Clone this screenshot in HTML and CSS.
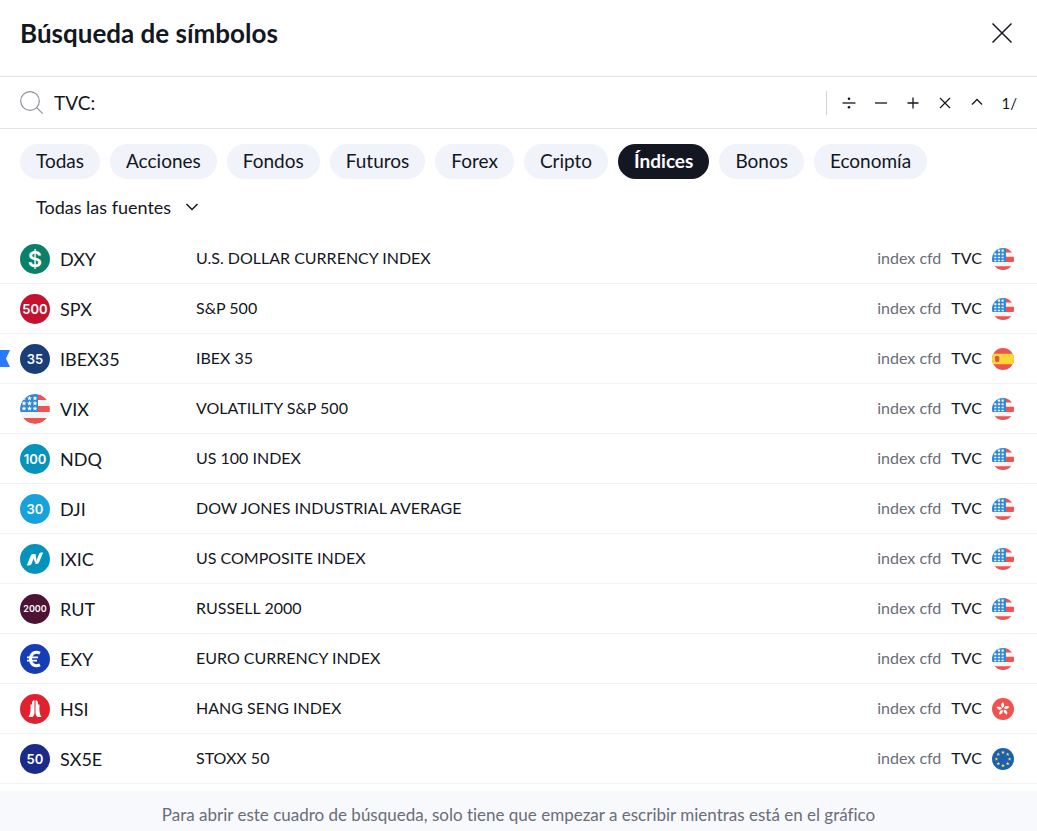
FILE: index.html
```html
<!DOCTYPE html>
<html lang="es">
<head>
<meta charset="utf-8">
<title>Búsqueda de símbolos</title>
<link rel="stylesheet" href="styles.css">
</head>
<body>
<svg class="defs" aria-hidden="true">
  <defs>
    <clipPath id="round"><circle cx="15" cy="15" r="15"/></clipPath>
    <path id="star" d="M0-2.500 .7-.8 2.500-.8 1.100.4 1.600 2.200 0 1.100-1.600 2.200-1.100.4-2.500-.8-.7-.8z"/>
    <symbol id="us" viewBox="0 0 30 30">
      <g clip-path="url(#round)">
        <path fill="#f3f4f6" d="M0 0h30v30H0z"/>
        <path fill="#ef5350" d="M18 0h12v6H18zM18 12h12v6H18zM0 24h30v6H0z"/>
        <path fill="#2f86d6" d="M0 0h18v18H0z"/>
        <g fill="#fff">
          <use href="#star" x="4" y="4.200"/><use href="#star" x="9.500" y="4.200"/><use href="#star" x="15" y="4.200"/>
          <use href="#star" x="4" y="9.300"/><use href="#star" x="9.500" y="9.300"/><use href="#star" x="15" y="9.300"/>
          <use href="#star" x="4" y="14.500"/><use href="#star" x="9.500" y="14.500"/><use href="#star" x="15" y="14.500"/>
        </g>
      </g>
    </symbol>
    <symbol id="us-small" viewBox="0 0 30 30">
      <g clip-path="url(#round)">
        <path fill="#f3f4f6" d="M0 0h30v30H0z"/>
        <path fill="#ef5350" d="M18 0h12v6H18zM18 12h12v7H18zM0 25h30v5H0z"/>
        <path fill="#2f86d6" d="M0 0h19v19H0z"/>
        <path fill="#e9f3fc" d="M8 2h3v3H8zM13 2h3v3h-3zM3 7h3v3H3zM8 7h3v3H8zM13 7h3v3h-3zM3 12h3v2H3zM8 12h3v2H8zM13 12h3v2h-3zM3 16h3v2H3zM8 16h3v2H8zM13 16h3v2h-3z"/>
      </g>
    </symbol>
    <symbol id="es" viewBox="0 0 30 30">
      <g clip-path="url(#round)">
        <path fill="#ef5350" d="M0 0h30v30H0z"/>
        <path fill="#fdd835" d="M0 8h30v14H0z"/>
        <path fill="#e5534b" d="M4 12h6v4.500a3 3 0 0 1-6 0z"/>
        <path fill="#b9603a" d="M5 11h4v2H5z"/>
      </g>
    </symbol>
    <symbol id="hk" viewBox="0 0 30 30">
      <circle cx="15" cy="15" r="15" fill="#ef5350"/>
      <g fill="#fff">
        <path id="petal" d="M14.500 13.500C11.500 11 12 7 15.500 5.800c-.3 1.700 1.600 3 1 5.200-.3 1-1 1.800-2 2.500z"/>
        <use href="#petal" transform="rotate(72 15 15)"/>
        <use href="#petal" transform="rotate(144 15 15)"/>
        <use href="#petal" transform="rotate(216 15 15)"/>
        <use href="#petal" transform="rotate(288 15 15)"/>
      </g>
    </symbol>
    <symbol id="eu" viewBox="0 0 30 30">
      <circle cx="15" cy="15" r="15" fill="#1c60b4"/>
      <g fill="#f6e04b">
        <use href="#star" x="15" y="6"/><use href="#star" x="21.400" y="8.600"/><use href="#star" x="24" y="15"/><use href="#star" x="21.400" y="21.400"/>
        <use href="#star" x="15" y="24"/><use href="#star" x="8.600" y="21.400"/><use href="#star" x="6" y="15"/><use href="#star" x="8.600" y="8.600"/>
      </g>
    </symbol>
  </defs>
</svg>

<main class="dialog">
  <header class="header">
    <h1 class="title">Búsqueda de símbolos</h1>
    <button class="close" type="button" aria-label="Cerrar">
      <svg width="22" height="22" viewBox="0 0 22 22"><path d="M1.500 1.500l19 19M20.500 1.500l-19 19" fill="none" stroke="#131722" stroke-width="1.500"/></svg>
    </button>
  </header>

  <div class="search">
    <svg class="search-icon" width="24" height="24" viewBox="0 0 24 24" fill="none" stroke="#8f929b" stroke-width="1.200"><circle cx="10" cy="10" r="9.300"/><path d="M16.700 16.700l6 6"/></svg>
    <input class="search-input" type="text" value="TVC:" aria-label="Buscar símbolo">
    <div class="operators">
      <button class="op" type="button" aria-label="Dividir"><svg width="14" height="14" viewBox="0 0 14 14"><path d="M.5 7h13" stroke="#131722" stroke-width="1.300"/><circle cx="7" cy="2.700" r="1.300" fill="#131722"/><circle cx="7" cy="11.300" r="1.300" fill="#131722"/></svg></button>
      <button class="op" type="button" aria-label="Restar"><svg width="14" height="14" viewBox="0 0 14 14"><path d="M1 7h12" stroke="#131722" stroke-width="1.300"/></svg></button>
      <button class="op" type="button" aria-label="Sumar"><svg width="14" height="14" viewBox="0 0 14 14"><path d="M1.500 7h11M7 1.500v11" stroke="#131722" stroke-width="1.300"/></svg></button>
      <button class="op" type="button" aria-label="Multiplicar"><svg width="14" height="14" viewBox="0 0 14 14"><path d="M2 2l10 10M12 2L2 12" stroke="#131722" stroke-width="1.200"/></svg></button>
      <button class="op" type="button" aria-label="Potencia"><svg width="14" height="14" viewBox="0 0 14 14"><path d="M2 8.500l5-5 5 5" fill="none" stroke="#131722" stroke-width="1.300"/></svg></button>
      <button class="op" type="button" aria-label="Inverso">1/</button>
    </div>
  </div>

  <nav class="chips" aria-label="Tipo de símbolo">
    <button class="chip" type="button">Todas</button>
    <button class="chip" type="button">Acciones</button>
    <button class="chip" type="button">Fondos</button>
    <button class="chip" type="button">Futuros</button>
    <button class="chip" type="button">Forex</button>
    <button class="chip" type="button">Cripto</button>
    <button class="chip chip-active" type="button" aria-pressed="true">Índices</button>
    <button class="chip" type="button">Bonos</button>
    <button class="chip" type="button">Economía</button>
  </nav>

  <button class="sources" type="button">Todas las fuentes
    <svg width="14" height="10" viewBox="0 0 14 10"><path d="M1.500 2L7 7.500 12.500 2" fill="none" stroke="#131722" stroke-width="1.500"/></svg>
  </button>

  <table class="results">
    <tbody>
      <tr>
        <td class="symbol"><div class="symbol-box"><span class="badge green">$</span>DXY</div></td>
        <td class="name">U.S. DOLLAR CURRENCY INDEX</td>
        <td class="market"><div class="market-box"><span class="kind">index cfd</span><span class="exchange">TVC</span><svg class="flag"><use href="#us-small"/></svg></div></td>
      </tr>
      <tr>
        <td class="symbol"><div class="symbol-box"><span class="badge red">500</span>SPX</div></td>
        <td class="name">S&amp;P 500</td>
        <td class="market"><div class="market-box"><span class="kind">index cfd</span><span class="exchange">TVC</span><svg class="flag"><use href="#us-small"/></svg></div></td>
      </tr>
      <tr>
        <td class="symbol"><svg class="marker" viewBox="0 0 10 17"><path d="M0 0h10L6 8.500 10 17H0z" fill="#2979ff"/></svg><div class="symbol-box"><span class="badge navy">35</span>IBEX35</div></td>
        <td class="name">IBEX 35</td>
        <td class="market"><div class="market-box"><span class="kind">index cfd</span><span class="exchange">TVC</span><svg class="flag"><use href="#es"/></svg></div></td>
      </tr>
      <tr>
        <td class="symbol"><div class="symbol-box"><svg class="badge"><use href="#us"/></svg>VIX</div></td>
        <td class="name">VOLATILITY S&amp;P 500</td>
        <td class="market"><div class="market-box"><span class="kind">index cfd</span><span class="exchange">TVC</span><svg class="flag"><use href="#us-small"/></svg></div></td>
      </tr>
      <tr>
        <td class="symbol"><div class="symbol-box"><span class="badge teal">100</span>NDQ</div></td>
        <td class="name">US 100 INDEX</td>
        <td class="market"><div class="market-box"><span class="kind">index cfd</span><span class="exchange">TVC</span><svg class="flag"><use href="#us-small"/></svg></div></td>
      </tr>
      <tr>
        <td class="symbol"><div class="symbol-box"><span class="badge sky">30</span>DJI</div></td>
        <td class="name">DOW JONES INDUSTRIAL AVERAGE</td>
        <td class="market"><div class="market-box"><span class="kind">index cfd</span><span class="exchange">TVC</span><svg class="flag"><use href="#us-small"/></svg></div></td>
      </tr>
      <tr>
        <td class="symbol"><div class="symbol-box"><svg class="badge teal" viewBox="0 0 30 30" fill="#fff"><path d="M6.800 21.500l3.900-9.800c.5-1.200 1.300-1.700 2.500-1.700h2.300l1 6.200-1.300 3-1.600-4.700-1.700 4.500c-.7 1.800-1.800 2.500-3.300 2.500z"/><path d="M23.200 8.500l-3.900 9.300c-.6 1.500-1.600 2.200-2.800 2.200h-1.300l2.700-7.300 1-2.300c.6-1.300 1.500-1.900 2.800-1.900z"/></svg>IXIC</div></td>
        <td class="name">US COMPOSITE INDEX</td>
        <td class="market"><div class="market-box"><span class="kind">index cfd</span><span class="exchange">TVC</span><svg class="flag"><use href="#us-small"/></svg></div></td>
      </tr>
      <tr>
        <td class="symbol"><div class="symbol-box"><span class="badge plum">2000</span>RUT</div></td>
        <td class="name">RUSSELL 2000</td>
        <td class="market"><div class="market-box"><span class="kind">index cfd</span><span class="exchange">TVC</span><svg class="flag"><use href="#us-small"/></svg></div></td>
      </tr>
      <tr>
        <td class="symbol"><div class="symbol-box"><svg class="badge blue" viewBox="0 0 30 30" fill="none" stroke="#fff"><path stroke-width="3" d="M20 9.200C15 6.700 10.500 9.500 10.500 15s4.500 8.300 9.500 5.800"/><path stroke-width="1.700" d="M7 13.300h11M7 16.700h10"/></svg>EXY</div></td>
        <td class="name">EURO CURRENCY INDEX</td>
        <td class="market"><div class="market-box"><span class="kind">index cfd</span><span class="exchange">TVC</span><svg class="flag"><use href="#us-small"/></svg></div></td>
      </tr>
      <tr>
        <td class="symbol"><div class="symbol-box"><svg class="badge scarlet" viewBox="0 0 30 30" fill="#fff"><path d="M14.500 6.500V19c0 1.500-.7 3-2.200 4H8.500c2.500-4 2-8 2-12.500h1.500V7.500h1v-1z"/><path d="M15.500 6.500V19c0 1.500.7 3 2.200 4h3.800c-2.500-4-2-8-2-12.500H18V7.500h-1v-1z"/></svg>HSI</div></td>
        <td class="name">HANG SENG INDEX</td>
        <td class="market"><div class="market-box"><span class="kind">index cfd</span><span class="exchange">TVC</span><svg class="flag"><use href="#hk"/></svg></div></td>
      </tr>
      <tr>
        <td class="symbol"><div class="symbol-box"><span class="badge indigo">50</span>SX5E</div></td>
        <td class="name">STOXX 50</td>
        <td class="market"><div class="market-box"><span class="kind">index cfd</span><span class="exchange">TVC</span><svg class="flag"><use href="#eu"/></svg></div></td>
      </tr>
    </tbody>
  </table>

  <footer class="footer">Para abrir este cuadro de búsqueda, solo tiene que empezar a escribir mientras está en el gráfico</footer>
</main>
</body>
</html>
```

FILE: styles.css
```css
* {
  box-sizing: border-box;
}

body {
  margin: 0;
  background: #fff;
  color: #131722;
  font-family: "Trebuchet MS", Lato, sans-serif;
  font-size: 18px;
  font-variant-ligatures: none;
}

button,
input {
  margin: 0;
  padding: 0;
  border: 0;
  background: none;
  color: inherit;
  font: inherit;
}

svg {
  display: block;
  flex: none;
}

.defs {
  position: absolute;
  width: 0;
  height: 0;
}

.header {
  display: flex;
  align-items: center;
  justify-content: space-between;
  padding: 16px 24px 26px 20px;
  border-bottom: 1px solid #e0e3eb;
}

.title {
  margin: 0;
  font-size: 26px;
  font-weight: 700;
  line-height: 34px;
}

.search {
  display: flex;
  align-items: center;
  height: 52px;
  padding: 0 20px;
  gap: 10px;
  border-bottom: 1px solid #e0e3eb;
}

.search-input {
  flex: 1;
  min-width: 0;
  font-size: 19px;
  outline: none;
}

.operators {
  display: flex;
  align-items: center;
  height: 24px;
  padding-left: 15px;
  gap: 18px;
  border-left: 1px solid #d1d4dc;
}

.op {
  font-size: 15px;
  line-height: 24px;
}

.chips {
  display: flex;
  flex-wrap: wrap;
  gap: 10px;
  padding: 15px 20px 0;
}

.chip {
  height: 35px;
  padding: 0 16px 2px;
  border-radius: 18px;
  background: #f0f3fa;
  font-size: 19px;
}

.chip-active {
  background: #131722;
  color: #fff;
  font-weight: 700;
}

.sources {
  display: flex;
  align-items: center;
  gap: 14px;
  margin: 16px 0 15px 36px;
  font-size: 18px;
  line-height: 24px;
}

.results {
  width: 100%;
  border-collapse: separate;
  border-spacing: 0;
}

.results td {
  height: 50px;
  padding: 0;
  border-bottom: 1px solid #f0f3fa;
}

.results .symbol {
  position: relative;
  width: 196px;
  padding-left: 20px;
  font-size: 18px;
}

.symbol-box,
.market-box {
  display: flex;
  align-items: center;
  gap: 10px;
}

.market-box {
  justify-content: flex-end;
  padding-right: 23px;
}

.results .name {
  padding-bottom: 2px;
  font-size: 16px;
}

.kind,
.exchange {
  padding-bottom: 2px;
  font-size: 16px;
}

.kind {
  color: #6a6d78;
}

.flag {
  width: 22px;
  height: 22px;
}

.marker {
  position: absolute;
  top: 16px;
  left: 0;
  width: 10px;
  height: 17px;
}

.badge {
  display: flex;
  align-items: center;
  justify-content: center;
  width: 30px;
  height: 30px;
  border-radius: 50%;
  color: #fff;
  font-family: Inter, sans-serif;
  font-size: 13px;
  font-weight: 600;
}

.green {
  background: #0b8069;
  font-size: 22px;
}

.red { background: #c4122f; }
.navy { background: #1b3e78; }
.teal { background: #0693bb; }
.sky { background: #18a2dc; }
.blue { background: #153db5; }
.scarlet { background: #e0222f; }
.indigo { background: #1a2b88; }

.plum {
  background: #4c1333;
  font-size: 9px;
}

.footer {
  margin-top: 7px;
  padding: 12px 20px 4px;
  background: #f8f9fd;
  color: #6a6d78;
  font-size: 17px;
  line-height: 24px;
  text-align: center;
}
```
